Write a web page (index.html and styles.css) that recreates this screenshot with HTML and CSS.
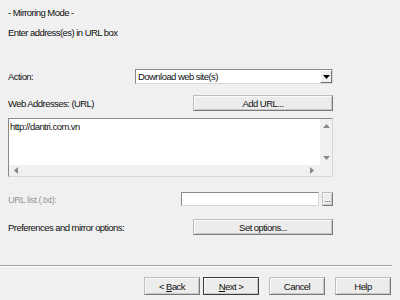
FILE: index.html
```html
<!DOCTYPE html>
<html>
<head>
<meta charset="utf-8">
<link rel="stylesheet" href="styles.css">
</head>
<body>
<div class="page">
  <div class="title">- Mirroring Mode -</div>
  <div class="subtitle">Enter address(es) in URL box</div>

  <div class="row action-row">
    <span class="label action-label">Action:</span>
    <div class="select">
      <span class="select-text">Download web site(s)</span>
      <span class="select-btn"><svg width="7" height="4" viewBox="0 0 7 4"><path d="M0 0h7L3.5 4z" fill="#000"/></svg></span>
    </div>
  </div>

  <div class="row web-row">
    <span class="label grow">Web Addresses: (URL)</span>
    <button class="btn wide">Add URL...</button>
  </div>

  <div class="urlbox">
    <div class="url-main">
      <div class="url-text">http://dantri.com.vn</div>
      <div class="vscroll">
        <svg width="7" height="4" viewBox="0 0 7 4"><path d="M0 4h7L3.5 0z" fill="#888"/></svg>
        <svg width="7" height="4" viewBox="0 0 7 4"><path d="M0 0h7L3.5 4z" fill="#888"/></svg>
      </div>
    </div>
    <div class="hscroll">
      <div class="hbar">
        <svg width="4" height="7" viewBox="0 0 4 7"><path d="M4 0v7L0 3.5z" fill="#888"/></svg>
        <svg width="4" height="7" viewBox="0 0 4 7"><path d="M0 0v7L4 3.5z" fill="#888"/></svg>
      </div>
      <div class="corner"></div>
    </div>
  </div>

  <div class="row list-row">
    <span class="label grow disabled">URL list (.txt):</span>
    <div class="field"></div>
    <button class="btn dots">...</button>
  </div>

  <div class="row pref-row">
    <span class="label grow">Preferences and mirror options:</span>
    <button class="btn wide">Set options...</button>
  </div>
</div>

<div class="separator"></div>

<div class="footer">
  <button class="btn nav">&lt; <u>B</u>ack</button>
  <button class="btn nav default"><u>N</u>ext &gt;</button>
  <button class="btn nav gap">Cancel</button>
  <button class="btn nav gap">Help</button>
</div>
</body>
</html>
```

FILE: styles.css
```css
html, body {
  margin: 0;
  padding: 0;
  background: #f0f0f0;
  width: 400px;
  height: 300px;
  overflow: hidden;
}

body {
  font-family: "Liberation Sans", Arial, sans-serif;
  font-size: 9.5px;
  letter-spacing: -0.55px;
  color: #111;
}

.page {
  padding: 7px 0 0 8px;
  width: 325px;
}

.title {
  height: 12px;
  line-height: 12px;
}

.subtitle {
  margin-top: 8px;
  height: 12px;
  line-height: 12px;
}

.row {
  display: flex;
  align-items: center;
}

.label {
  white-space: nowrap;
}

.grow {
  flex: 1;
}

.disabled {
  color: #9a9a9a;
}

.action-row {
  margin-top: 30px;
  height: 15px;
}

.action-label {
  width: 127px;
}

.select {
  flex: 1;
  height: 15px;
  box-sizing: border-box;
  background: #fff;
  border-top: 1px solid #8a8a8a;
  border-left: 1px solid #8a8a8a;
  border-right: 1px solid #d8d8d8;
  border-bottom: 1px solid #d8d8d8;
  display: flex;
  align-items: center;
}

.select-text {
  flex: 1;
  padding-left: 2px;
}

.select-btn {
  width: 12px;
  height: 13px;
  box-sizing: border-box;
  background: #f0f0f0;
  border-top: 1px solid #fff;
  border-left: 1px solid #fff;
  border-right: 1px solid #707070;
  border-bottom: 1px solid #707070;
  display: flex;
  align-items: center;
  justify-content: center;
}

.web-row {
  margin-top: 11px;
  height: 16px;
}

.btn {
  font-family: inherit;
  font-size: 9.5px;
  letter-spacing: -0.55px;
  color: #111;
  background: #ececec;
  box-sizing: border-box;
  margin: 0;
  padding: 0;
  border-top: 1px solid #bdbdbd;
  border-left: 1px solid #bdbdbd;
  border-right: 1px solid #7a7a7a;
  border-bottom: 1px solid #7a7a7a;
  box-shadow: inset 1px 1px 0 #fafafa, inset -1px -1px 0 #c8c8c8;
}

.wide {
  width: 140px;
  height: 16px;
}

.urlbox {
  margin-top: 7px;
  height: 59px;
  box-sizing: border-box;
  background: #fff;
  border-top: 1px solid #8a8a8a;
  border-left: 1px solid #8a8a8a;
  border-right: 1px solid #d8d8d8;
  border-bottom: 1px solid #d8d8d8;
  display: flex;
  flex-direction: column;
}

.url-main {
  flex: 1;
  display: flex;
}

.url-text {
  flex: 1;
  padding: 2px 0 0 1px;
  line-height: 11px;
}

.vscroll {
  width: 12px;
  background: #f0f0f0;
  display: flex;
  flex-direction: column;
  justify-content: space-between;
  align-items: center;
  padding: 5px 0 5px;
}

.hscroll {
  height: 11px;
  display: flex;
}

.hbar {
  flex: 1;
  background: #f0f0f0;
  display: flex;
  justify-content: space-between;
  align-items: center;
  padding: 0 6px 0 5px;
}

.corner {
  width: 12px;
  background: #f0f0f0;
}

.list-row {
  margin-top: 15px;
  height: 14px;
}

.field {
  width: 138px;
  height: 14px;
  box-sizing: border-box;
  background: #fff;
  border-top: 1px solid #8a8a8a;
  border-left: 1px solid #8a8a8a;
  border-right: 1px solid #d8d8d8;
  border-bottom: 1px solid #d8d8d8;
}

.dots {
  width: 11px;
  height: 14px;
  margin-left: 3px;
  line-height: 14px;
  font-size: 8px;
  letter-spacing: 0;
}

.pref-row {
  margin-top: 13px;
  height: 16px;
}

.separator {
  margin-top: 30px;
  width: 392px;
  height: 1px;
  background: #a0a0a0;
  border-bottom: 1px solid #fff;
}

.footer {
  margin-top: 10px;
  padding-right: 9px;
  display: flex;
  justify-content: flex-end;
}

.nav {
  width: 56px;
  height: 18px;
  margin-left: 3px;
}

.nav.gap {
  margin-left: 10px;
}

.nav.default {
  border: 1px solid #3c3c3c;
}
```
